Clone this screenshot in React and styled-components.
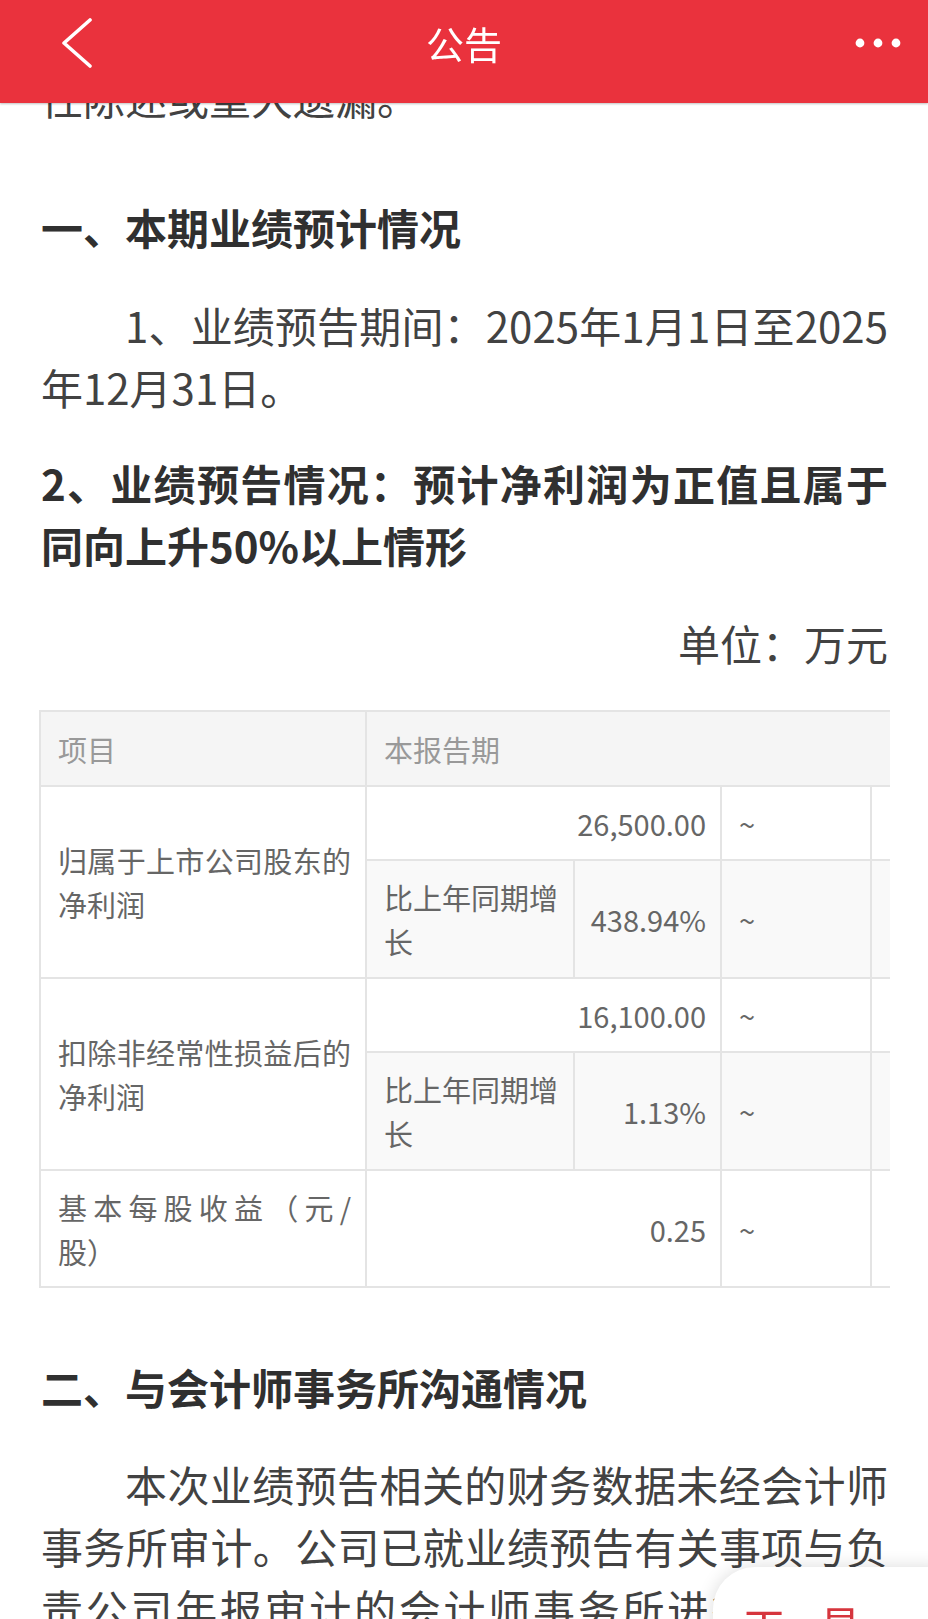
import React from 'react';
import styled, { createGlobalStyle } from 'styled-components';

const GlobalStyle = createGlobalStyle`
  html, body {
    margin: 0;
    padding: 0;
    background: #ffffff;
    overflow: hidden;
  }
  body {
    font-family: "Noto Sans CJK SC", "Noto Sans", sans-serif;
  }
`;

const Header = styled.div`
  position: fixed;
  top: 0;
  left: 0;
  right: 0;
  height: 103px;
  background: #ea323d;
  display: flex;
  align-items: center;
  justify-content: space-between;
  padding: 0 26px 0 60px;
  box-sizing: border-box;
  box-shadow: 0 1px 2px rgba(0, 0, 0, 0.25);
  z-index: 10;
`;

const Title = styled.div`
  position: absolute;
  left: 0;
  right: 0;
  top: 0;
  height: 84px;
  display: flex;
  align-items: center;
  justify-content: center;
  color: #ffffff;
  font-size: 38px;
  pointer-events: none;
`;

const IconBtn = styled.div`
  display: flex;
  align-items: center;
  height: 86px;
  align-self: flex-start;
`;

const Page = styled.div`
  padding: 66px 40px 0 41px;
  color: #424242;
  font-size: 42px;
  line-height: 62px;
`;

const Para = styled.p`
  margin: ${p => p.$top || 0}px 0 0;
  text-indent: ${p => (p.$indent ? '2em' : '0')};
  text-align: ${p => p.$align || 'justify'};
`;

const Heading = styled.h2`
  margin: ${p => p.$top || 68}px 0 0;
  font-size: 42px;
  line-height: 62px;
  font-weight: 700;
  color: #303030;
  text-align: justify;
`;

const TableWrap = styled.div`
  margin: 36px -2px 0 -2px;
  overflow: hidden;
`;

const Table = styled.table`
  border-collapse: collapse;
  table-layout: fixed;
  width: 981px;
  font-size: 29px;
  line-height: 44px;
  color: #666666;
  text-spacing-trim: space-all;
`;

const Cell = styled.td`
  border: 2px solid #e4e4e4;
  padding: ${p => (p.$num ? '0 14px 0 6px' : '0 14px 0 17px')};
  vertical-align: middle;
  background: ${p => (p.$shade ? '#f9f9f9' : '#ffffff')};
  text-align: ${p => (p.$num ? 'right' : p.$align || 'left')};
  white-space: ${p => (p.$num ? 'nowrap' : 'normal')};
`;

const HeadCell = styled.th`
  border: 2px solid #e4e4e4;
  padding: 0 14px 0 17px;
  background: #f5f5f5;
  color: #999999;
  font-weight: 400;
  text-align: left;
`;

const Row = styled.tr`
  height: ${p => p.$h}px;
`;

const FloatCard = styled.div`
  position: fixed;
  left: 713px;
  top: 1567px;
  width: 260px;
  height: 120px;
  background: #ffffff;
  border-radius: 42px;
  box-shadow: 0 0 18px rgba(0, 0, 0, 0.14);
  padding: 36px 0 0 29px;
  box-sizing: border-box;
  color: #d6353d;
  font-size: 44px;
  line-height: 44px;
  letter-spacing: 32px;
  white-space: nowrap;
  z-index: 5;
`;

const rows = [
  { label: '归属于上市公司股东的净利润', value: '26,500.00', pct: '438.94%' },
  { label: '扣除非经常性损益后的净利润', value: '16,100.00', pct: '1.13%' },
];

export default function App() {
  return (
    <>
      <GlobalStyle />
      <Header>
        <IconBtn>
          <svg width="32" height="50" viewBox="0 0 32 50">
            <path d="M30 2 L4 25 L30 48" fill="none" stroke="#fff" strokeWidth="3.6" strokeLinecap="round" strokeLinejoin="round" />
          </svg>
        </IconBtn>
        <Title>公告</Title>
        <IconBtn>
          <svg width="48" height="12" viewBox="0 0 48 12">
            <circle cx="6" cy="6" r="4.4" fill="#fff" />
            <circle cx="24" cy="6" r="4.4" fill="#fff" />
            <circle cx="42" cy="6" r="4.4" fill="#fff" />
          </svg>
        </IconBtn>
      </Header>

      <Page>
        <Para>性陈述或重大遗漏。</Para>
        <Heading>一、本期业绩预计情况</Heading>
        <Para $indent $top={36}>1、业绩预告期间：2025年1月1日至2025年12月31日。</Para>
        <Heading $top={34}>2、业绩预告情况：预计净利润为正值且属于同向上升50%以上情形</Heading>
        <Para $align="right" $top={36}>单位：万元</Para>

        <TableWrap>
          <Table>
            <colgroup>
              <col style={{ width: 326 }} />
              <col style={{ width: 208 }} />
              <col style={{ width: 147 }} />
              <col style={{ width: 150 }} />
              <col style={{ width: 150 }} />
            </colgroup>
            <tbody>
              <Row $h={75}>
                <HeadCell>项目</HeadCell>
                <HeadCell colSpan={4}>本报告期</HeadCell>
              </Row>
              {rows.map(r => (
                <React.Fragment key={r.label}>
                  <Row $h={74}>
                    <Cell rowSpan={2} $align="justify">{r.label}</Cell>
                    <Cell colSpan={2} $num>{r.value}</Cell>
                    <Cell>~</Cell>
                    <Cell />
                  </Row>
                  <Row $h={118}>
                    <Cell $shade>比上年同期增长</Cell>
                    <Cell $shade $num>{r.pct}</Cell>
                    <Cell $shade>~</Cell>
                    <Cell $shade />
                  </Row>
                </React.Fragment>
              ))}
              <Row $h={117}>
                <Cell $align="justify">基本每股收益（元/股）</Cell>
                <Cell colSpan={2} $num>0.25</Cell>
                <Cell>~</Cell>
                <Cell />
              </Row>
            </tbody>
          </Table>
        </TableWrap>

        <Heading>二、与会计师事务所沟通情况</Heading>
        <Para $indent $top={35}>
          本次业绩预告相关的财务数据未经会计师事务所审计。公司已就业绩预告有关事项与负责公司年报审计的会计师事务所进行了预沟通，公司与会计师事务所在本次业绩预告方面不存在分歧。
        </Para>
      </Page>

      <FloatCard>工具</FloatCard>
    </>
  );
}
